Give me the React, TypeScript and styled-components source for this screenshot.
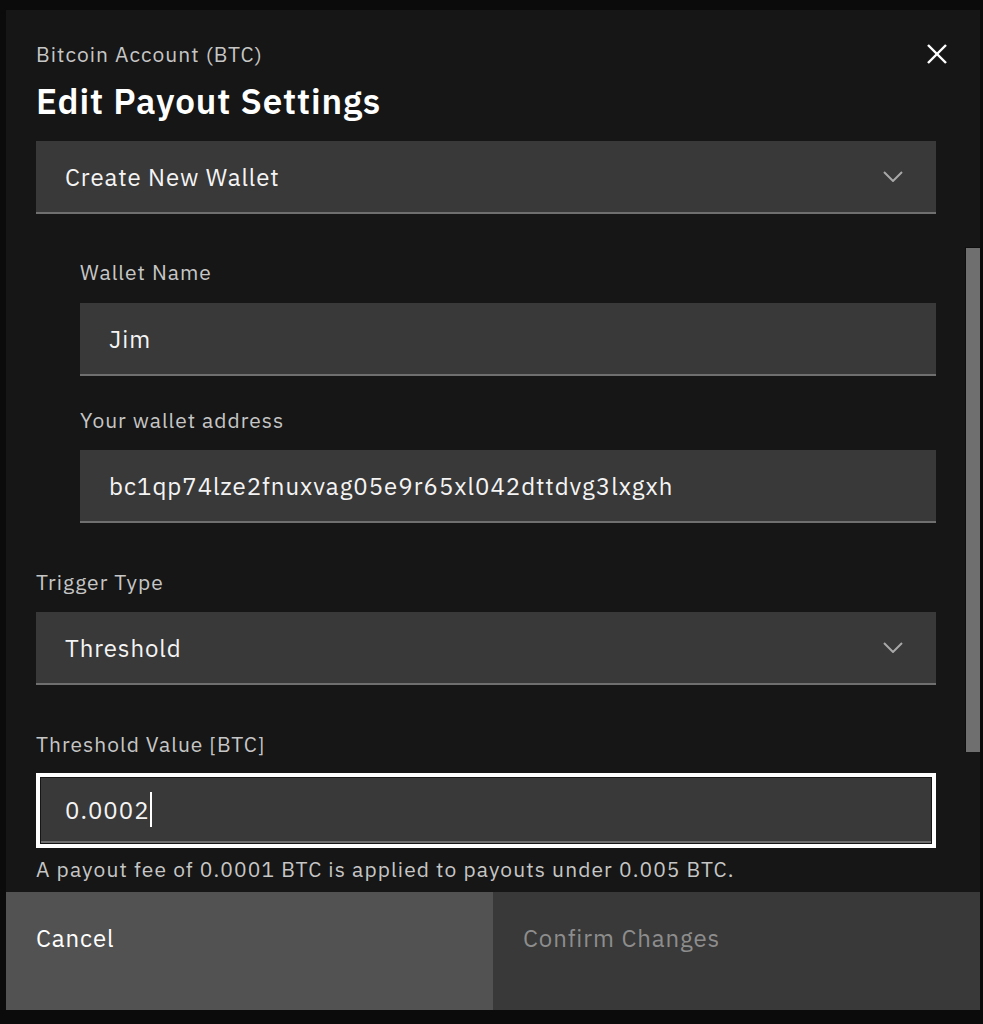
import styled, { createGlobalStyle } from 'styled-components';

const GlobalStyle = createGlobalStyle`
  html, body {
    margin: 0;
    padding: 0;
    background: #0b0b0b;
  }
  body {
    font-family: 'IBM Plex Sans', Roboto, 'Noto Sans', sans-serif;
    -webkit-font-smoothing: antialiased;
  }
  * {
    box-sizing: border-box;
  }
`;

const Page = styled.div`
  width: 983px;
  height: 1024px;
  padding: 10px 3px 14px 6px;
  display: flex;
`;

const Modal = styled.div`
  width: 974px;
  height: 1000px;
  background: #161616;
  display: flex;
  flex-direction: column;
`;

const Header = styled.div`
  display: flex;
  justify-content: space-between;
  align-items: flex-start;
  padding: 31px 33px 0 30px;
`;

const Titles = styled.div`
  display: flex;
  flex-direction: column;
`;

const Eyebrow = styled.div`
  font-size: 21px;
  line-height: 27px;
  letter-spacing: 1.05px;
  color: #c6c6c6;
`;

const Heading = styled.h2`
  margin: 11px 0 0;
  font-size: 35px;
  line-height: 44px;
  font-weight: 600;
  letter-spacing: 0.9px;
  color: #ffffff;
`;

const CloseButton = styled.button`
  background: none;
  border: 0;
  padding: 0;
  margin-top: 3px;
  width: 20px;
  height: 20px;
  display: flex;
  color: #ffffff;
  cursor: pointer;
`;

const Body = styled.div`
  flex: 1;
  display: flex;
  min-height: 0;
`;

const Content = styled.div`
  flex: 1;
  display: flex;
  flex-direction: column;
  padding: 18px 29px 0 30px;
`;

const Track = styled.div`
  width: 15px;
  flex-shrink: 0;
`;

const Thumb = styled.div`
  margin-top: 124px;
  height: 505px;
  background: #6f6f6f;
  border-left: 1px solid #0e0e0e;
  border-top: 1px solid #0e0e0e;
`;

const Nested = styled.div`
  display: flex;
  flex-direction: column;
  padding-left: 44px;
`;

const FieldLabel = styled.label<{ $top: number; $gap: number }>`
  display: block;
  margin-top: ${(p) => p.$top}px;
  margin-bottom: ${(p) => p.$gap}px;
  font-size: 21px;
  line-height: 27px;
  letter-spacing: 1px;
  color: #c6c6c6;
`;

const Select = styled.div`
  height: 73px;
  background: #393939;
  border-bottom: 2px solid #6f6f6f;
  padding: 0 33px 0 29px;
  display: flex;
  align-items: center;
  justify-content: space-between;
  font-size: 24px;
  letter-spacing: 0.9px;
  color: #f4f4f4;
`;

const Input = styled.div`
  height: 73px;
  background: #393939;
  border-bottom: 2px solid #6f6f6f;
  padding: 0 29px;
  display: flex;
  align-items: center;
  font-size: 24px;
  letter-spacing: 1px;
  color: #f4f4f4;
  white-space: nowrap;
`;

const FocusRing = styled.div`
  border: 4px solid #ffffff;
  padding: 1px;
  background: #161616;
`;

const FocusedInput = styled(Input)`
  height: 65px;
  padding-left: 24px;
`;

const Caret = styled.span`
  display: inline-block;
  width: 2px;
  height: 35px;
  margin-left: 0;
  background: #ffffff;
`;

const Helper = styled.div`
  margin-top: 8px;
  font-size: 21px;
  line-height: 27px;
  letter-spacing: 1.1px;
  color: #c6c6c6;
`;

const Footer = styled.div`
  display: grid;
  grid-template-columns: 1fr 1fr;
  height: 118px;
  flex-shrink: 0;
`;

const FooterButton = styled.button<{ $primary?: boolean }>`
  border: 0;
  margin: 0;
  padding: 31px 30px 0;
  text-align: left;
  display: flex;
  align-items: flex-start;
  font-family: inherit;
  font-size: 24px;
  line-height: 30px;
  letter-spacing: 0.9px;
  background: ${(p) => (p.$primary ? '#393939' : '#525252')};
  color: ${(p) => (p.$primary ? '#8d8d8d' : '#ffffff')};
`;

const Chevron = () => (
  <svg width="20" height="11" viewBox="0 0 20 11" fill="none">
    <polyline points="1,1 10,10 19,1" stroke="#a8a8a8" strokeWidth="2" />
  </svg>
);

const CloseIcon = () => (
  <svg width="20" height="20" viewBox="0 0 20 20" fill="none">
    <line x1="1" y1="1" x2="19" y2="19" stroke="#ffffff" strokeWidth="2.4" />
    <line x1="19" y1="1" x2="1" y2="19" stroke="#ffffff" strokeWidth="2.4" />
  </svg>
);

const App = () => {
  return (
    <Page>
      <GlobalStyle />
      <Modal>
        <Header>
          <Titles>
            <Eyebrow>Bitcoin Account (BTC)</Eyebrow>
            <Heading>Edit Payout Settings</Heading>
          </Titles>
          <CloseButton aria-label="Close">
            <CloseIcon />
          </CloseButton>
        </Header>
        <Body>
          <Content>
            <Select>
              Create New Wallet
              <Chevron />
            </Select>
            <Nested>
              <FieldLabel $top={45} $gap={17}>Wallet Name</FieldLabel>
              <Input>Jim</Input>
              <FieldLabel $top={31} $gap={16}>Your wallet address</FieldLabel>
              <Input>bc1qp74lze2fnuxvag05e9r65xl042dttdvg3lxgxh</Input>
            </Nested>
            <FieldLabel $top={46} $gap={16}>Trigger Type</FieldLabel>
            <Select>
              Threshold
              <Chevron />
            </Select>
            <FieldLabel $top={46} $gap={15}>Threshold Value [BTC]</FieldLabel>
            <FocusRing>
              <FocusedInput>
                0.0002
                <Caret />
              </FocusedInput>
            </FocusRing>
            <Helper>A payout fee of 0.0001 BTC is applied to payouts under 0.005 BTC.</Helper>
          </Content>
          <Track>
            <Thumb />
          </Track>
        </Body>
        <Footer>
          <FooterButton>Cancel</FooterButton>
          <FooterButton $primary>Confirm Changes</FooterButton>
        </Footer>
      </Modal>
    </Page>
  );
};

export default App;
